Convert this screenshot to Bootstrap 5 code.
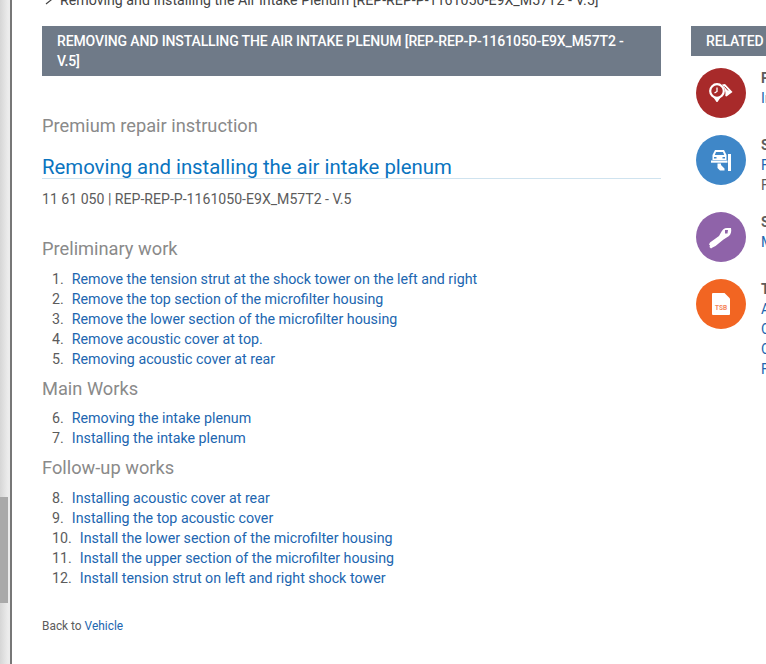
<!DOCTYPE html>
<html lang="en">
<head>
  <meta charset="UTF-8">
  <title>Removing and installing the air intake plenum</title>
  <meta name="viewport" content="width=device-width, initial-scale=1">
  <link href="https://cdn.jsdelivr.net/npm/bootstrap@5.3.0/dist/css/bootstrap.min.css" rel="stylesheet">
  <style>
    html, body { height: 100%; overflow: hidden; }
    body { background: #fff; font-family: Roboto, "Liberation Sans", sans-serif; font-size: 14px; line-height: 20px; color: #5c5c5c; }
    a { color: #2166b0; text-decoration: none; }
    .page-shell { width: 1100px; height: 664px; }
    .side-rail { width: 12px; background: linear-gradient(90deg, #d6d6d6, #ececec 80%); border-right: 2px solid #777; position: relative; flex: none; }
    .rail-thumb { position: absolute; left: 0; top: 497px; width: 8px; height: 106px; background: #a9a9a9; }
    .main-area { padding-left: 30px; }
    .crumb-line { margin-top: -10px; height: 36px; padding-left: 3px; color: #444; gap: 7px; font-size: 14.2px; }
    .content-col { width: 619px; flex: none; }
    .related-col { width: 300px; flex: none; margin-left: 30px; }
    .title-bar { background: #6f7a88; color: #fff; font-weight: 500; font-size: 14px; line-height: 20px; letter-spacing: -.12px; padding: 5px 15px; text-transform: uppercase; }
    .title-bar.short-bar { height: 30px; }
    .sub-head { font-size: 18.25px; font-weight: 400; line-height: 24px; color: #8a8a8a; margin: 0; }
    .doc-title { font-size: 20.35px; font-weight: 400; line-height: 22px; color: #0a74bf; margin: 0; border-bottom: 1px solid #cfe3ef; }
    .doc-code { font-size: 14.1px; }
    .step-list { margin: 0; padding: 0 0 0 10px; list-style: none; font-size: 14.25px; }
    .step-list li { display: flex; gap: 8px; }
    .related-list { padding-left: 5px; margin-top: 12px; gap: 17px; }
    .round-icon { width: 50px; height: 50px; border-radius: 50%; flex: none; }
    .round-icon svg { display: block; }
    .icon-red { background: #a82a2a; }
    .icon-blue { background: #3f87c8; }
    .icon-purple { background: #8f63a9; }
    .icon-orange { background: #f26522; }
    .related-row { gap: 15px; }
    .related-name { font-weight: 700; color: #5c5c5c; }
    .back-line { font-size: 11.9px; }
  </style>
</head>
<body>
  <div class="page-shell d-flex">
    <div class="side-rail"><div class="rail-thumb"></div></div>
    <div class="main-area flex-grow-1">
      <div class="crumb-line d-flex align-items-start">
        <svg width="8" height="20" viewBox="0 0 8 20"><path d="M1 6l5 4-5 4" fill="none" stroke="#444" stroke-width="1.2"/></svg>
        <span>Removing and Installing the Air Intake Plenum [REP-REP-P-1161050-E9X_M57T2 - V.5]</span>
      </div>
      <div class="d-flex">
        <div class="content-col">
          <div class="title-bar">Removing and installing the Air Intake Plenum [REP-REP-P-1161050-E9X_M57T2 - V.5]</div>
          <h3 class="sub-head" style="margin-top:38px">Premium repair instruction</h3>
          <h2 class="doc-title" style="margin-top:18px">Removing and installing the air intake plenum</h2>
          <p class="doc-code" style="margin:10px 0 0">11 61 050 | REP-REP-P-1161050-E9X_M57T2 - V.5</p>
          <h3 class="sub-head" style="margin-top:28px">Preliminary work</h3>
          <ol class="step-list" style="margin-top:8px">
            <li><span>1.</span><a href="#">Remove the tension strut at the shock tower on the left and right</a></li>
            <li><span>2.</span><a href="#">Remove the top section of the microfilter housing</a></li>
            <li><span>3.</span><a href="#">Remove the lower section of the microfilter housing</a></li>
            <li><span>4.</span><a href="#">Remove acoustic cover at top.</a></li>
            <li><span>5.</span><a href="#">Removing acoustic cover at rear</a></li>
          </ol>
          <h3 class="sub-head" style="margin-top:8px">Main Works</h3>
          <ol class="step-list" style="margin-top:7px">
            <li><span>6.</span><a href="#">Removing the intake plenum</a></li>
            <li><span>7.</span><a href="#">Installing the intake plenum</a></li>
          </ol>
          <h3 class="sub-head" style="margin-top:8px">Follow-up works</h3>
          <ol class="step-list" style="margin-top:8px">
            <li><span>8.</span><a href="#">Installing acoustic cover at rear</a></li>
            <li><span>9.</span><a href="#">Installing the top acoustic cover</a></li>
            <li><span>10.</span><a href="#">Install the lower section of the microfilter housing</a></li>
            <li><span>11.</span><a href="#">Install the upper section of the microfilter housing</a></li>
            <li><span>12.</span><a href="#">Install tension strut on left and right shock tower</a></li>
          </ol>
          <p class="back-line" style="margin:28px 0 0">Back to <a href="#">Vehicle</a></p>
        </div>
        <div class="related-col">
          <div class="title-bar short-bar">Related information</div>
          <div class="related-list d-flex flex-column">
            <div class="d-flex related-row">
              <div class="round-icon icon-red">
                <svg width="50" height="50" viewBox="0 0 50 50">
                  <circle cx="21" cy="23" r="6.800" fill="none" stroke="#fff" stroke-width="2.200"/>
                  <path d="M17.500 29.500h7l-3 4.500h-1z" fill="#fff"/>
                  <path d="M21 19.500v4l-2.500 1.500" fill="none" stroke="#fff" stroke-width="1.300"/>
                  <path d="M26 16.500l3-.5 7.500 8-6 4.500-1.200-.6c.8-4-.6-8.200-3.300-11.400z" fill="#fff"/>
                  <path d="M28.500 18.500l3.500 4" stroke="#a82a2a" stroke-width="1"/>
                </svg>
              </div>
              <div><div class="related-name">Part numbers</div><a href="#">Intake plenum</a></div>
            </div>
            <div class="d-flex related-row">
              <div class="round-icon icon-blue">
                <svg width="50" height="50" viewBox="0 0 50 50">
                  <path d="M19 15h9l2.500 5v5h-14v-5z" fill="#fff"/>
                  <path d="M20 17h7l1.200 3h-9.400z" fill="#3f87c8"/>
                  <rect x="18" y="22" width="2.500" height="1.500" fill="#3f87c8"/>
                  <rect x="26.500" y="22" width="2.500" height="1.500" fill="#3f87c8"/>
                  <rect x="15" y="25.500" width="16.500" height="2.200" fill="#fff"/>
                  <rect x="32" y="19" width="3" height="17" fill="#fff"/>
                  <path d="M21.500 28.500h3.500v1.500l3.500 3.500v2h-4.500l-2.500-2.500z" fill="#fff"/>
                </svg>
              </div>
              <div><div class="related-name">Service work</div><a href="#">Fitting work</a><div>Fitting time</div></div>
            </div>
            <div class="d-flex related-row">
              <div class="round-icon icon-purple">
                <svg width="50" height="50" viewBox="0 0 50 50">
                  <path d="M14 30.500l9-6.500 2-3.500c1.200-2.500 3.200-4.500 6-4.500h4c.7 3.500 0 6-2 8l-5.500 3.500-8 6.500-3 1.500-1.500 1-1.500-1.500.5-1.500-1-1z" fill="#fff"/>
                  <path d="M29 18h3l-.5 3.500h-2.500z" fill="#8f63a9"/>
                </svg>
              </div>
              <div><div class="related-name">Special tools</div><a href="#">Mounting tool</a></div>
            </div>
            <div class="d-flex related-row">
              <div class="round-icon icon-orange">
                <svg width="50" height="50" viewBox="0 0 50 50">
                  <path d="M17 14h11.500l5.500 5.500V35a1 1 0 0 1-1 1H17a1 1 0 0 1-1-1V15a1 1 0 0 1 1-1z" fill="#fff"/>
                  <text x="25" y="31" text-anchor="middle" font-family="Roboto, sans-serif" font-weight="700" font-size="6.500" fill="#f5855a">TSB</text>
                </svg>
              </div>
              <div><div class="related-name">Technical bulletins</div><a href="#">Air intake</a><br><a href="#">Cover</a><br><a href="#">Cooling</a><br><a href="#">Filter</a></div>
            </div>
          </div>
        </div>
      </div>
    </div>
  </div>
  <script src="https://cdn.jsdelivr.net/npm/bootstrap@5.3.0/dist/js/bootstrap.bundle.min.js"></script>
</body>
</html>
